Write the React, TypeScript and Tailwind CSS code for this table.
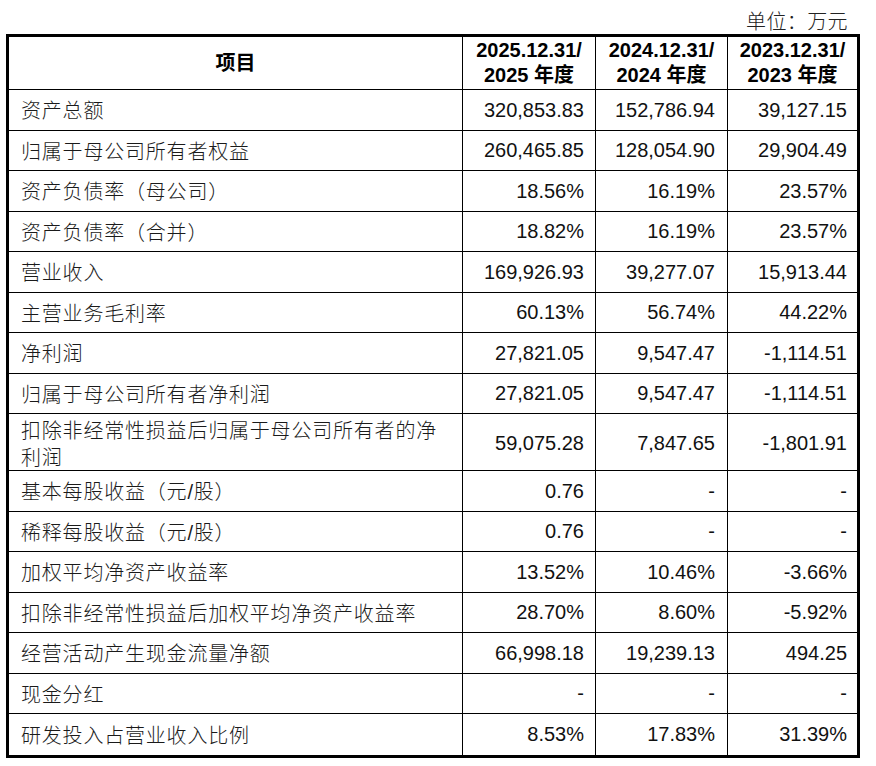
import React from "react";

type Row = { label: React.ReactNode; v: [string, string, string]; tall?: boolean };

const rows: Row[] = [
  { label: "资产总额", v: ["320,853.83", "152,786.94", "39,127.15"] },
  { label: "归属于母公司所有者权益", v: ["260,465.85", "128,054.90", "29,904.49"] },
  { label: "资产负债率（母公司）", v: ["18.56%", "16.19%", "23.57%"] },
  { label: "资产负债率（合并）", v: ["18.82%", "16.19%", "23.57%"] },
  { label: "营业收入", v: ["169,926.93", "39,277.07", "15,913.44"] },
  { label: "主营业务毛利率", v: ["60.13%", "56.74%", "44.22%"] },
  { label: "净利润", v: ["27,821.05", "9,547.47", "-1,114.51"] },
  { label: "归属于母公司所有者净利润", v: ["27,821.05", "9,547.47", "-1,114.51"] },
  {
    label: (
      <>
        扣除非经常性损益后归属于母公司所有者的净
        <br />
        利润
      </>
    ),
    v: ["59,075.28", "7,847.65", "-1,801.91"],
    tall: true,
  },
  { label: "基本每股收益（元/股）", v: ["0.76", "-", "-"] },
  { label: "稀释每股收益（元/股）", v: ["0.76", "-", "-"] },
  { label: "加权平均净资产收益率", v: ["13.52%", "10.46%", "-3.66%"] },
  { label: "扣除非经常性损益后加权平均净资产收益率", v: ["28.70%", "8.60%", "-5.92%"] },
  { label: "经营活动产生现金流量净额", v: ["66,998.18", "19,239.13", "494.25"] },
  { label: "现金分红", v: ["-", "-", "-"] },
  { label: "研发投入占营业收入比例", v: ["8.53%", "17.83%", "31.39%"] },
];

const grid = "grid grid-cols-[453px_133px_132px_130px]";
const labelFont = { fontFamily: '"Liberation Sans", "Noto Sans CJK SC", sans-serif' };

export default function App() {
  return (
    <div className="w-[876px] h-[766px] bg-white pl-[6px] text-black" style={labelFont}>
      <div className="w-[854px] h-[34px] pt-[10px] pr-[12px] text-right text-[20px] leading-[24px] font-light text-[#222] tracking-[0.4px]">
        单位：万元
      </div>
      <div className="w-[854px] border-[3px] border-black">
        <div className={`${grid} h-[53px] border-b border-black font-bold text-[20px]`}>
          <div className="flex items-center justify-center">项目</div>
          {[
            ["2025.12.31/", "2025 年度"],
            ["2024.12.31/", "2024 年度"],
            ["2023.12.31/", "2023 年度"],
          ].map((h, i) => (
            <div key={i} className="border-l border-black flex flex-col items-center justify-center leading-[25px]">
              <span>{h[0]}</span>
              <span>{h[1]}</span>
            </div>
          ))}
        </div>
        {rows.map((r, i) => {
          const last = i === rows.length - 1;
          return (
            <div
              key={i}
              className={`${grid} ${r.tall ? "h-[57px]" : "h-[40.5px]"} ${last ? "" : "border-b border-black"}`}
            >
              <div className="flex items-center pl-[12px] pt-[4px] text-[20px] leading-[27px] font-light text-[#1a1a1a] tracking-[0.8px]">
                <span>{r.label}</span>
              </div>
              <div className="border-l border-black flex items-center justify-end pr-[11px] text-[20px] text-[#111]">
                {r.v[0]}
              </div>
              <div className="border-l border-black flex items-center justify-end pr-[12px] text-[20px] text-[#111]">
                {r.v[1]}
              </div>
              <div className="border-l border-black flex items-center justify-end pr-[10px] text-[20px] text-[#111]">
                {r.v[2]}
              </div>
            </div>
          );
        })}
      </div>
    </div>
  );
}
